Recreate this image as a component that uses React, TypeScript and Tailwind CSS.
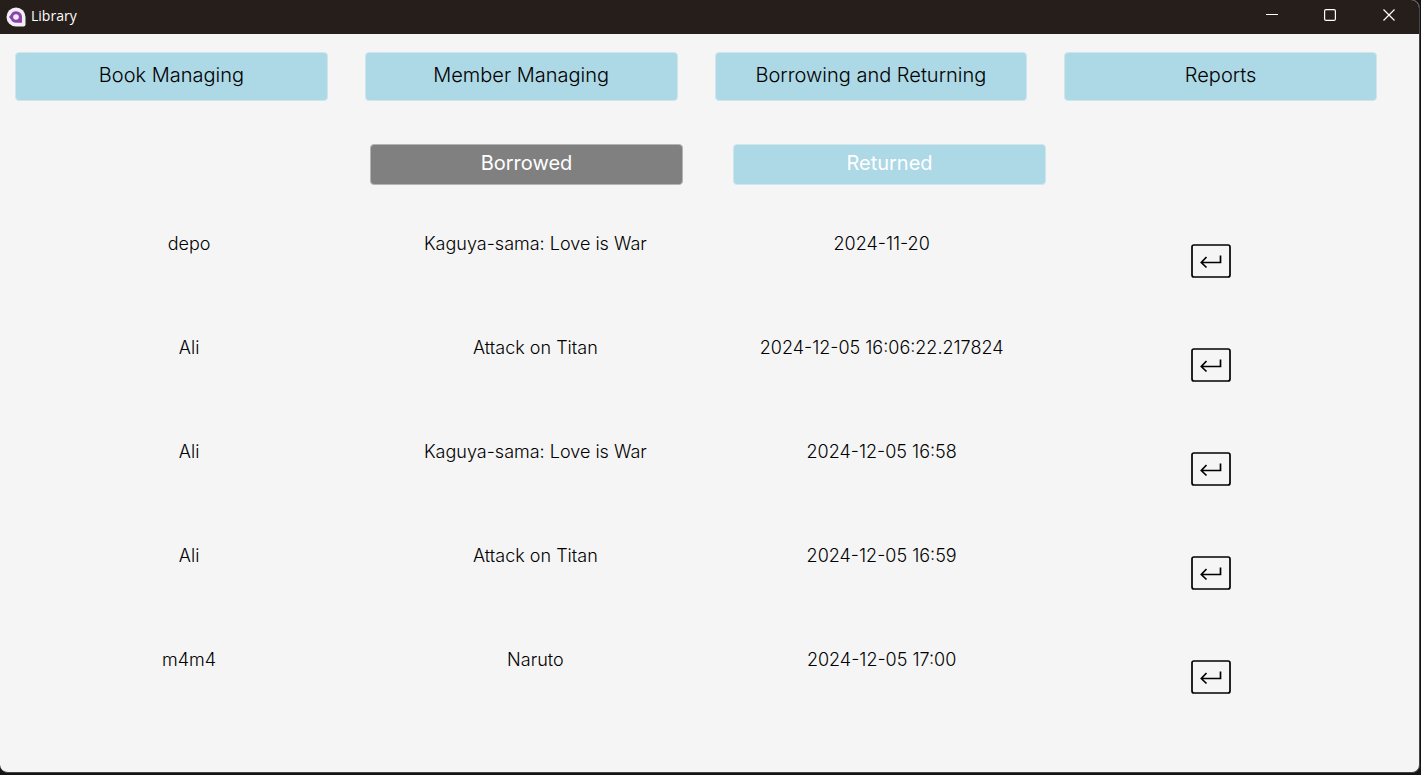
import React from "react";

const tabs = ["Book Managing", "Member Managing", "Borrowing and Returning", "Reports"];

const loans = [
  { member: "depo", book: "Kaguya-sama: Love is War", date: "2024-11-20" },
  { member: "Ali", book: "Attack on Titan", date: "2024-12-05 16:06:22.217824" },
  { member: "Ali", book: "Kaguya-sama: Love is War", date: "2024-12-05 16:58" },
  { member: "Ali", book: "Attack on Titan", date: "2024-12-05 16:59" },
  { member: "m4m4", book: "Naruto", date: "2024-12-05 17:00" },
];

function ReturnIcon() {
  return (
    <svg width="40" height="34" viewBox="0 0 40 34" fill="none" stroke="black" aria-hidden="true">
      <rect x="1" y="1" width="38" height="32" rx="2" strokeWidth="1.7" />
      <path d="M29.500 11.500v7H10.500M15.500 13L10.300 18.500l5.200 5" strokeWidth="1.700" />
    </svg>
  );
}

export default function App() {
  return (
    <div className="flex min-h-screen flex-col bg-[#151314] pb-[2px] font-['Inter',sans-serif] text-black">
      <div className="mr-px flex flex-1 flex-col rounded-b-lg rounded-tr-lg border-r border-b border-[#444444] bg-[#f5f5f5]">
        <header className="flex h-[34px] items-center rounded-tr-lg bg-[#261e1b] text-white">
          <svg className="ml-1.5" width="20" height="20" viewBox="0 0 20 20" aria-hidden="true">
            <path d="M10 .5a9.500 9.500 0 1 0 0 19h7.500a2 2 0 0 0 2-2V10A9.500 9.500 0 0 0 10 .5z" fill="#f3eef5" />
            <path d="M3 10L5 7.500A5.800 5.800 0 0 1 16 10v5.800h-6A5.800 5.800 0 0 1 5 12.500z" fill="#8b44ac" />
            <circle cx="10" cy="10" r="2.800" fill="#f3eef5" />
          </svg>
          <h1 className="ml-[5px] flex-1 pb-0.5 font-['Open_Sans',sans-serif] text-sm">Library</h1>
          <button aria-label="Minimize" className="flex h-full w-[58px] items-center justify-center pb-1">
            <svg width="12" height="12" stroke="white"><path d="M0 5.500h12" /></svg>
          </button>
          <button aria-label="Maximize" className="flex h-full w-[58px] items-center justify-center pb-1">
            <svg width="12" height="12" stroke="white" fill="none"><rect x=".6" y=".6" width="10.800" height="10.800" rx="1.500" strokeWidth="1.200" /></svg>
          </button>
          <button aria-label="Close" className="flex h-full w-[60px] items-center justify-center pb-1">
            <svg width="12" height="12" stroke="white" strokeWidth="1.200"><path d="M.5.5l11 11M11.500.5l-11 11" /></svg>
          </button>
        </header>
        <main className="flex-1 pl-[15px] pt-[18px]">
          <nav className="grid grid-cols-4 gap-x-[37px] pr-[42px]">
            {tabs.map((t) => (
              <button key={t} className="h-[49px] rounded-[4px] border border-[#cfe6ed] bg-[#add8e6] pb-1 text-xl font-light">{t}</button>
            ))}
          </nav>
          <div className="mt-[43px] grid grid-cols-2 gap-x-[50px] pl-[355px] pr-[373px]">
            <button className="h-[41px] rounded-[4px] border border-[#b4b4b4] bg-[#808080] pb-1 text-xl text-white">Borrowed</button>
            <button className="h-[41px] rounded-[4px] border border-[#cfe6ed] bg-[#add8e6] pb-1 text-xl text-white">Returned</button>
          </div>
          <div className="mt-8 pl-px pr-[18px]">
            <table className="w-full table-fixed text-center text-lg font-light">
              <tbody>
                {loans.map((l, i) => (
                  <tr key={i} className="h-[104px] align-top">
                    <td className="pt-[13px]">{l.member}</td>
                    <td className="pt-[13px]">{l.book}</td>
                    <td className="pt-[13px]">{l.date}</td>
                    <td className="pt-[27px] pr-[34px]">
                      <button aria-label="Return book" className="mx-auto block"><ReturnIcon /></button>
                    </td>
                  </tr>
                ))}
              </tbody>
            </table>
          </div>
        </main>
      </div>
    </div>
  );
}
